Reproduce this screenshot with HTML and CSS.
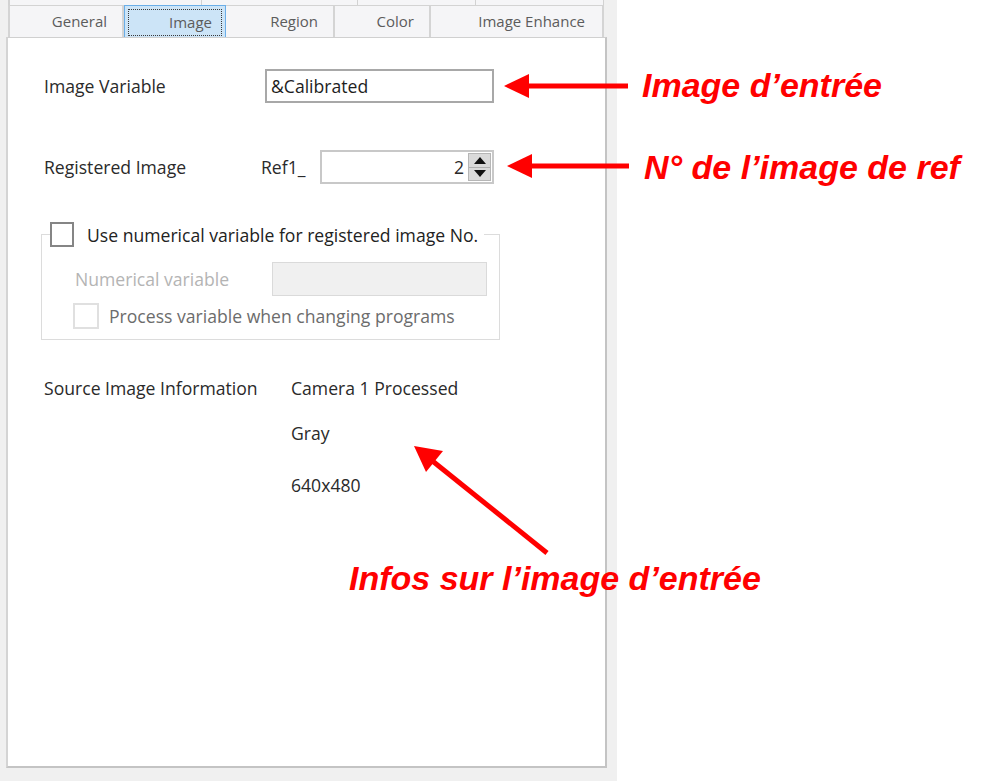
FILE: index.html
```html
<!DOCTYPE html>
<html lang="fr">
<head>
<meta charset="utf-8">
<title>Image settings</title>
<link rel="stylesheet" href="styles.css">
</head>
<body>
<div class="screen">
  <div class="window">
    <div class="tabs-back">
      <span class="back-seg seg1"></span>
      <span class="back-seg seg2"></span>
      <span class="back-seg seg3"></span>
      <span class="back-seg seg4"></span>
    </div>
    <div class="tabs">
      <div class="tab tab-general">General</div>
      <div class="tab tab-image selected"><span class="focus">Image</span></div>
      <div class="tab tab-region">Region</div>
      <div class="tab tab-color">Color</div>
      <div class="tab tab-enhance">Image Enhance</div>
    </div>
    <div class="panel">
      <div class="row row-var">
        <span class="label label-var">Image Variable</span>
        <div class="input input-var">&amp;Calibrated</div>
      </div>
      <div class="row row-reg">
        <span class="label label-reg">Registered Image</span>
        <span class="prefix">Ref1_</span>
        <div class="spin">
          <span class="spin-value">2</span>
          <div class="spin-btns">
            <span class="spin-btn"><svg width="12" height="7" viewBox="0 0 12 7"><polygon points="6,0 12,7 0,7" fill="#111"/></svg></span>
            <span class="spin-btn"><svg width="12" height="7" viewBox="0 0 12 7"><polygon points="0,0 12,0 6,7" fill="#111"/></svg></span>
          </div>
        </div>
      </div>
      <fieldset class="group">
        <legend class="group-legend">
          <span class="checkbox"></span>
          <span class="legend-text">Use numerical variable for registered image No.</span>
        </legend>
        <div class="row row-num">
          <span class="label disabled-label">Numerical variable</span>
          <div class="input input-disabled"></div>
        </div>
        <div class="row row-proc">
          <span class="checkbox checkbox-disabled"></span>
          <span class="proc-text">Process variable when changing programs</span>
        </div>
      </fieldset>
      <div class="info">
        <span class="label label-info">Source Image Information</span>
        <div class="info-values">
          <span class="info-line info-cam">Camera 1 Processed</span>
          <span class="info-line info-gray">Gray</span>
          <span class="info-line info-size">640x480</span>
        </div>
      </div>
    </div>
  </div>

  <svg class="arrows" width="982" height="781" viewBox="0 0 982 781">
    <line x1="628" y1="86" x2="522" y2="86" stroke="#ff0000" stroke-width="5"/>
    <polygon points="504,86 529,74 529,98" fill="#ff0000"/>
    <line x1="629" y1="166" x2="525" y2="166" stroke="#ff0000" stroke-width="5"/>
    <polygon points="507,166 532,154 532,178" fill="#ff0000"/>
    <line x1="547" y1="553" x2="430" y2="459" stroke="#ff0000" stroke-width="5"/>
    <polygon points="414,446 426,472 443,451" fill="#ff0000"/>
  </svg>
  <div class="note note-1">Image d’entrée</div>
  <div class="note note-2">N° de l’image de ref</div>
  <div class="note note-3">Infos sur l’image d’entrée</div>
</div>
</body>
</html>
```

FILE: styles.css
```css
html, body {
  margin: 0;
  padding: 0;
  background: #ffffff;
}

body {
  font-family: "Open Sans", "Noto Sans", "DejaVu Sans", sans-serif;
  font-size: 17.6px;
  color: #2a2a2a;
}

.screen {
  position: relative;
  width: 982px;
  height: 781px;
  display: flex;
  overflow: hidden;
}

.window {
  width: 617px;
  height: 781px;
  box-sizing: border-box;
  background: #f0f0f0;
  padding: 0 10px 13px 6px;
  display: flex;
  flex-direction: column;
}

/* back row of tabs (cut off at the top) */
.tabs-back {
  display: flex;
  height: 5px;
  margin-left: 2px;
  width: 596px;
}

.back-seg {
  display: block;
  height: 5px;
  background: #f5f5f7;
  border-right: 1px solid #d2d2d2;
  box-sizing: border-box;
}

.seg1 { width: 194px; border-left: 2px solid #d2d2d2; }
.seg2 { width: 156px; }
.seg3 { width: 118px; }
.seg4 { width: 128px; }

/* front tabs row */
.tabs {
  display: flex;
  height: 32px;
  margin-left: 2px;
  width: 596px;
  border-top: 1px solid #d3d3d3;
  box-sizing: border-box;
}

.tab {
  display: flex;
  align-items: center;
  justify-content: flex-end;
  box-sizing: border-box;
  padding: 0 15px 2px 0;
  background: #f5f5f7;
  border-right: 2px solid #d4d4d4;
  font-size: 15px;
  color: #5c5c5c;
  white-space: nowrap;
}

.tab-general { width: 116px; border-left: 2px solid #d4d4d4; }
.tab-image { width: 102px; }
.tab-region { width: 109px; }
.tab-color { width: 96px; }
.tab-enhance { width: 173px; padding-right: 17px; }

.tab.selected {
  background: #cce4f7;
  border: 1px solid #6aaee8;
  border-bottom: none;
  margin-top: -1px;
  padding: 3px 3px 1px 3px;
  align-items: stretch;
}

.focus {
  flex: 1;
  display: flex;
  align-items: center;
  justify-content: flex-end;
  padding: 0 9px 2px 0;
  border: 1px dotted #3a3a3a;
  color: #5c5c5c;
}

/* main panel */
.panel {
  flex: 1;
  background: #ffffff;
  border-top: 1px solid #d0d0d0;
  border-left: 2px solid #d4d4d4;
  border-right: 2px solid #c4c4c4;
  border-bottom: 2px solid #c4c4c4;
  padding: 31px 0 0 36px;
  display: flex;
  flex-direction: column;
  align-items: flex-start;
}

.row {
  display: flex;
  align-items: center;
}

.label {
  white-space: nowrap;
}

.row-var {
  height: 34px;
}

.label-var { width: 221px; }

.input {
  box-sizing: border-box;
  height: 34px;
  display: flex;
  align-items: center;
  padding-left: 4px;
}

.input-var {
  width: 229px;
  border: 2px solid #a8a8a8;
  color: #1e1e1e;
}

.row-reg {
  margin-top: 47px;
  height: 34px;
}

.label-reg { width: 217px; }

.prefix {
  width: 59px;
}

.spin {
  box-sizing: border-box;
  width: 174px;
  height: 34px;
  border: 2px solid #c8c8c8;
  display: flex;
  align-items: center;
  justify-content: flex-end;
  padding: 1px 1px 1px 0;
}

.spin-value {
  padding-right: 4px;
}

.spin-btns {
  width: 23px;
  height: 28px;
  display: flex;
  flex-direction: column;
  background: #dadada;
  border: 1px solid #b6b6b6;
  box-sizing: border-box;
}

.spin-btn {
  flex: 1;
  display: flex;
  align-items: center;
  justify-content: center;
}

.spin-btn + .spin-btn {
  border-top: 1px solid #b0b0b0;
}

/* group box */
.group {
  margin: 38px 0 0 -3px;
  width: 459px;
  box-sizing: border-box;
  border: 1px solid #dcdcdc;
  padding: 0 0 10px 33px;
}

.group-legend {
  display: flex;
  align-items: center;
  margin-left: -25px;
  padding: 0 6px 0 0;
  height: 25px;
}

.checkbox {
  display: block;
  width: 24px;
  height: 25px;
  box-sizing: border-box;
  border: 2px solid #858585;
  background: #ffffff;
}

.legend-text {
  margin-left: 13px;
  color: #222;
  white-space: nowrap;
}

.row-num {
  margin-top: 15px;
  height: 34px;
}

.disabled-label {
  width: 197px;
  color: #b4b4b4;
}

.input-disabled {
  width: 215px;
  background: #f0f0f0;
  border: 1px solid #dadada;
}

.row-proc {
  margin-top: 7px;
  margin-left: -2px;
  height: 26px;
}

.checkbox-disabled {
  width: 26px;
  height: 26px;
  border: 2px solid #e0e0e0;
}

.proc-text {
  margin-left: 10px;
  color: #6c6c6c;
  white-space: nowrap;
}

/* source information */
.info {
  display: flex;
  margin-top: 38px;
  line-height: 20px;
}

.label-info { width: 247px; }

.info-values {
  display: flex;
  flex-direction: column;
}

.info-line { display: block; }
.info-gray { margin-top: 25px; }
.info-size { margin-top: 32px; }

/* annotation overlay */
.arrows {
  position: absolute;
  left: 0;
  top: 0;
  pointer-events: none;
}

.note {
  position: absolute;
  font-family: "Liberation Sans", Arial, sans-serif;
  font-weight: bold;
  font-style: italic;
  font-size: 34px;
  line-height: 34px;
  color: #ff0000;
  white-space: nowrap;
}

.note-1 { left: 642px; top: 68px; }
.note-2 { left: 644px; top: 150px; }
.note-3 { left: 349px; top: 561px; }
```
